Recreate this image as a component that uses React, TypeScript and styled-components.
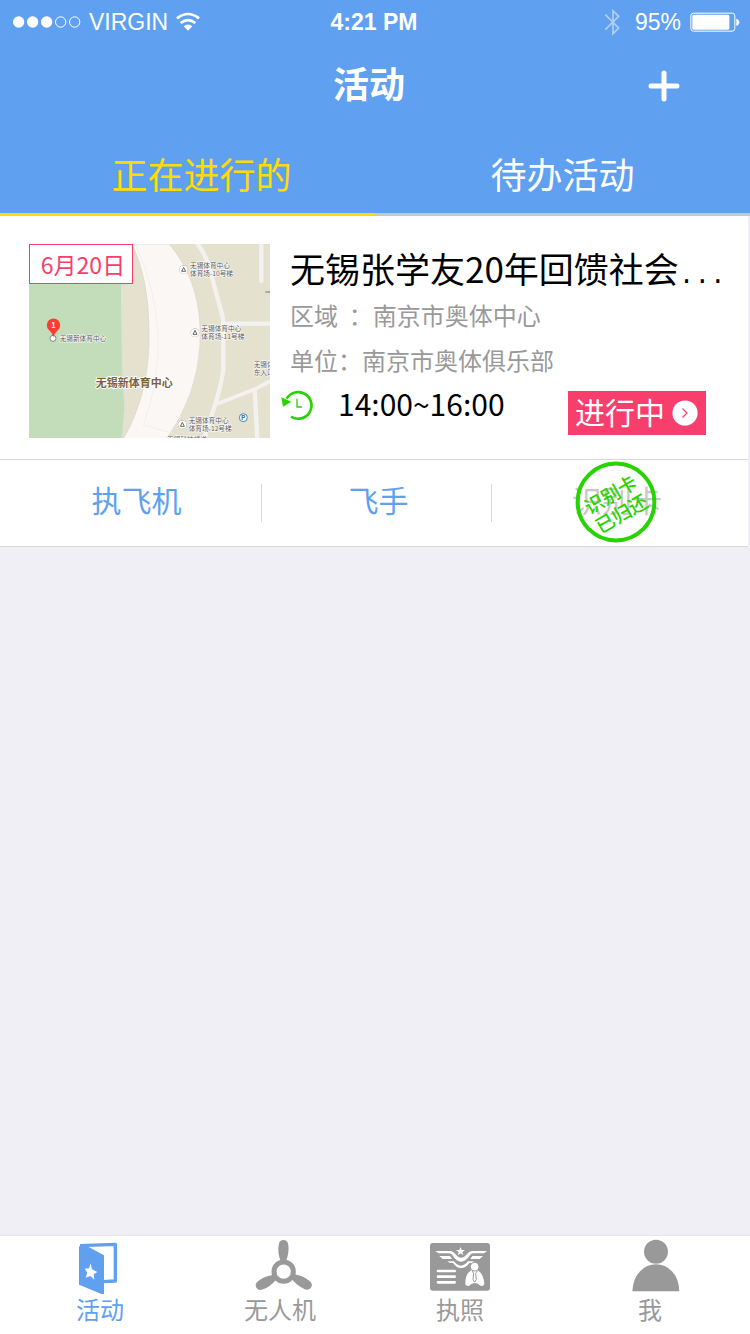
import React from "react";
import styled, { createGlobalStyle } from "styled-components";

const BLUE = "#60a0f0";
const YELLOW = "#ffdc00";
const PINK = "#f73e6c";
const GREEN = "#28d400";
const GREY = "#999999";
const LINE = "#d9d9d9";

const GlobalStyle = createGlobalStyle`
  * { box-sizing: border-box; }
  body {
    margin: 0;
    background: #efeff5;
    font-family: "Noto Sans CJK SC", sans-serif;
  }
  button {
    margin: 0;
    padding: 0;
    border: 0;
    background: none;
    font: inherit;
    cursor: pointer;
  }
  svg { display: block; flex: none; }
`;

const Screen = styled.div`
  min-height: 100vh;
  display: flex;
  flex-direction: column;
`;

const Header = styled.header`
  background: ${BLUE};
  color: #fff;
`;

const StatusBar = styled.div`
  height: 44px;
  padding: 0 10px 0 12px;
  display: grid;
  grid-template-columns: 1fr auto 1fr;
  align-items: center;
  font-family: "Liberation Sans", Arial, sans-serif;
  font-size: 23px;
  line-height: 44px;
`;

const StatusGroup = styled.div<{ $end?: boolean }>`
  display: flex;
  align-items: center;
  gap: ${(p) => (p.$end ? 9 : 7)}px;
  justify-content: ${(p) => (p.$end ? "flex-end" : "flex-start")};
`;

const Clock = styled.span`
  padding-right: 4px;
  font-weight: bold;
`;

const BluetoothSlot = styled.span`
  margin-right: 6px;
`;

const NavBar = styled.div`
  height: 84px;
  padding-right: 12px;
  display: grid;
  grid-template-columns: 1fr auto 1fr;
  align-items: center;
`;

const Title = styled.h1`
  grid-column: 2;
  margin: 0;
  padding-bottom: 8px;
  font-size: 36px;
  line-height: 48px;
  font-weight: 700;
`;

const AddButton = styled.button`
  justify-self: end;
  width: 44px;
  height: 44px;
  margin-right: 52px;
  display: grid;
  place-items: center;
`;

const Tabs = styled.div`
  display: grid;
  grid-template-columns: 1fr 1fr;
`;

const Tab = styled.button<{ $active?: boolean }>`
  height: 88px;
  padding: ${(p) => (p.$active ? "4px 0 0 28px" : "4px 0 0")};
  border-bottom: 3px solid ${(p) => (p.$active ? YELLOW : "#c8c8c8")};
  color: ${(p) => (p.$active ? YELLOW : "#fff")};
  font-size: 36px;
  line-height: 48px;
`;

const Main = styled.main`
  flex: 1;
`;

const Card = styled.article`
  margin-right: 2px;
  background: #fff;
  border-bottom: 1px solid ${LINE};
`;

const CardBody = styled.div`
  padding: 28px 0 21px 29px;
  display: flex;
  gap: 11px;
  border-bottom: 1px solid ${LINE};
`;

const MapBox = styled.div`
  position: relative;
  flex: none;
`;

const DateTag = styled.time`
  position: absolute;
  top: 0;
  left: 0;
  width: 104px;
  height: 40px;
  padding-left: 4px;
  border: 1px solid ${PINK};
  background: #fff;
  color: ${PINK};
  font-size: 23px;
  line-height: 38px;
  text-align: center;
`;

const Info = styled.div`
  flex: 1;
  min-width: 0;
`;

const EventTitle = styled.h2`
  margin: 0;
  padding-left: 9px;
  font-size: 35px;
  line-height: 48px;
  font-weight: 400;
  color: #000;
  white-space: nowrap;
`;

const Dots = styled.span`
  font-family: "Liberation Mono", monospace;
  font-size: 26px;
  line-height: 1;
`;

const Detail = styled.p`
  margin: 0;
  padding-left: 9px;
  font-size: 24px;
  line-height: 45px;
  color: ${GREY};
  white-space: pre;
`;

const TimeRow = styled.div`
  padding: 3px 42px 0 0;
  display: flex;
  align-items: flex-start;
`;

const ClockSlot = styled.span`
  padding-top: 4px;
`;

const TimeText = styled.span`
  margin-left: 24px;
  font-size: 30px;
  line-height: 36px;
  color: #000;
`;

const StateButton = styled.button`
  height: 44px;
  margin: 6px 0 0 auto;
  padding: 0 8px 0 7px;
  display: flex;
  align-items: center;
  gap: 7px;
  background: ${PINK};
  color: #fff;
  font-size: 30px;
  line-height: 40px;
`;

const StateLabel = styled.span`
  height: 44px;
`;

const Actions = styled.div`
  height: 86px;
  display: grid;
  grid-template-columns: 262fr 230fr 256fr;
  align-items: center;
`;

const Action = styled.button<{ $shift?: number }>`
  position: relative;
  height: 38px;
  padding: 0 0 8px ${(p) => p.$shift ?? 0}px;
  color: ${BLUE};
  font-size: 30px;
  line-height: 30px;
  border-right: 1px solid ${LINE};

  &:last-child { border-right: 0; }
  &:disabled { color: #c8c8c8; padding-right: 6px; cursor: default; }
`;

const StampSlot = styled.span`
  position: absolute;
  inset: 0;
  padding: 0 9px 2px 0;
  display: grid;
  place-content: center;
`;

const TabBar = styled.nav`
  padding: 2px 0 10px 10px;
  display: grid;
  grid-template-columns: 9fr 9fr 9fr 10fr;
  background: #fff;
  border-top: 1px solid #e6e6ea;
`;

const TabLink = styled.a<{ $active?: boolean }>`
  display: flex;
  flex-direction: column;
  align-items: center;
  color: ${(p) => (p.$active ? BLUE : GREY)};
  font-size: 24px;
  line-height: 30px;
  text-decoration: none;
`;

const SignalIcon = () => (
  <svg width="70" height="12" viewBox="36 47 210 36" aria-hidden="true">
    {[56, 98, 140].map((x) => <circle key={x} cx={x} cy="65" r="17" fill="#fff" />)}
    {[182, 224].map((x) => (
      <circle key={x} cx={x} cy="65" r="15.5" fill="none" stroke="#fff" strokeWidth="3" />
    ))}
  </svg>
);

const WifiIcon = () => (
  <svg width="26" height="20" viewBox="530 34 78 60" aria-hidden="true">
    <g fill="none" stroke="#fff" strokeWidth="8">
      <path d="M536 53 Q569 27 602 53" />
      <path d="M547 67 Q569 50 591 67" />
    </g>
    <path d="M556 77 Q569 66 582 77 L569 90Z" fill="#fff" />
  </svg>
);

const BluetoothIcon = () => (
  <svg width="16" height="28" viewBox="684 22 48 84" aria-hidden="true">
    <path d="M688 42 L728 82 L711 99 V30 L728 47 L688 87" fill="none" stroke="#fff" strokeWidth="5" opacity=".5" />
  </svg>
);

const BatteryIcon = () => (
  <svg width="50" height="20" viewBox="944 34 150 60" aria-hidden="true">
    <rect x="946.5" y="37.5" width="132" height="54" rx="8" fill="none" stroke="#fff" strokeWidth="3" />
    <rect x="951" y="42" width="111" height="45" rx="4" fill="#fff" />
    <path d="M1083 54 Q1092 57 1092 65 Q1092 73 1083 76Z" fill="#fff" />
  </svg>
);

const PlusIcon = () => (
  <svg width="32" height="32" viewBox="0 0 32 32" aria-hidden="true">
    <path d="M16 3V29M3 16H29" stroke="#fff" strokeWidth="5" strokeLinecap="round" />
  </svg>
);

const HistoryIcon = () => (
  <svg width="33" height="32" viewBox="16 463 99 96" aria-hidden="true">
    <path d="M33 492 A40 40 0 1 1 46 546" fill="none" stroke={GREEN} strokeWidth="8" />
    <path d="M17 488 L47 501 L22 516Z" fill={GREEN} />
    <path d="M64 492V517H79" fill="none" stroke={GREEN} strokeWidth="4" />
  </svg>
);

const GoIcon = () => (
  <svg width="26" height="26" viewBox="0 0 26 26" aria-hidden="true">
    <circle cx="13" cy="13" r="12.6" fill="#fff" />
    <path d="M10.5 8.5 L15 13 L10.5 17.5" fill="none" stroke={PINK} strokeWidth="1.2" />
  </svg>
);

const Stamp = () => (
  <svg width="82" height="82" viewBox="-41 -41 82 82" role="img" aria-label="识别卡已归还">
    <circle r="38.4" fill="none" stroke={GREEN} strokeWidth="4" />
    <g transform="rotate(-30)" fill={GREEN} fontSize="19" fontWeight="500" textAnchor="middle">
      <text x="-1" y="-2">识别卡</text>
      <text x="-1" y="20">已归还</text>
    </g>
  </svg>
);

const gates = [
  { x: 491, y: 104, no: "10" },
  { x: 525, y: 293, no: "11" },
  { x: 487, y: 569, no: "12" },
];

const VenueMap = () => (
  <svg width="241" height="194" viewBox="27 27 723 582" role="img" aria-label="无锡新体育中心地图">
    <rect x="27" y="27" width="723" height="582" fill="#e5e1cf" />
    <path d="M27 27H303V200L306 400L313 515L306 609H27Z" fill="#c3ddba" />
    <path
      d="M336 27 Q386 130 387 285 Q392 470 310 612 H440 Q532 480 540 330 Q550 150 448 27Z"
      fill="#faf7f5" stroke="#d8d4cb" strokeWidth="2"
    />
    <path d="M346 27 Q470 300 370 570 L470 598" fill="none" stroke="#efeae6" strokeWidth="2" />
    <g fill="none" stroke="#f4f2f0" strokeWidth="13" strokeLinejoin="round">
      <path d="M528 20 Q560 60 571 110 L604 230 Q611 250 610 290 V405 Q600 470 575 540 L552 612" />
      <path d="M608 266H752" />
      <path d="M590 507 L704 463 L752 438" strokeWidth="11" />
      <path d="M704 465 L712 612" />
      <path d="M724 20V138" strokeLinecap="round" />
    </g>
    <path d="M736 171H750" stroke="#aaa6a6" strokeWidth="6" />
    <g fontSize="20" fill="#555" stroke="#fff" strokeWidth="3" paintOrder="stroke">
      {gates.map((g) => (
        <g key={g.no}>
          <circle cx={g.x} cy={g.y} r="12" fill="#fff" stroke="#8b8b8b" strokeWidth="2" />
          <path d={`M${g.x - 6} ${g.y + 5}L${g.x} ${g.y - 7}L${g.x + 6} ${g.y + 5}Z`} fill="none" stroke="#666" strokeWidth="3" />
          <text x={g.x + 19} y={g.y - 4}>无锡体育中心</text>
          <text x={g.x + 19} y={g.y + 19}>{`体育场-${g.no}号梯`}</text>
        </g>
      ))}
      <text x="119" y="317">无锡新体育中心</text>
      <text x="701" y="397">无锡体育</text>
      <text x="701" y="419">东入口</text>
      <text x="441" y="620">无锡科技频道</text>
    </g>
    <text x="227" y="457" fontSize="33" fontWeight="700" fill="#7a6238" stroke="#fff" strokeWidth="5" paintOrder="stroke">
      无锡新体育中心
    </text>
    <circle cx="670" cy="548" r="12" fill="#fff" stroke="#4f86a8" strokeWidth="3" />
    <text x="663" y="555" fontSize="19" fontWeight="700" fill="#2b6c98">P</text>
    <circle cx="99" cy="310" r="9" fill="#fff" stroke="#888" strokeWidth="3" />
    <path d="M100 306 Q96 292 86 284 A20 20 0 1 1 115 284 Q104 292 100 306Z" fill="#fb3d34" />
    <text x="94" y="279" fontSize="22" fontWeight="700" fill="#fff">1</text>
  </svg>
);

const EventIcon = () => (
  <svg width="72" height="56" viewBox="12 24 216 168" aria-hidden="true">
    <path d="M60 47 L166 43 V153 L128 155" fill="none" stroke={BLUE} strokeWidth="10" strokeLinejoin="round" />
    <path d="M57 49 L86 51 L132 76 V195 L57 164Z" fill={BLUE} />
    <path d="M92 100 L96 118 L112 126 L101 133 L103 149 L91 138 L77 143 L82 128 L74 116 L87 115Z" fill="#fff" />
  </svg>
);

const DroneIcon = () => (
  <svg width="72" height="56" viewBox="552 24 216 168" aria-hidden="true">
    <circle cx="671" cy="125" r="29" fill="none" stroke={GREY} strokeWidth="15" />
    {[0, 120, 240].map((a) => (
      <path
        key={a}
        transform={`rotate(${a} 671 125)`}
        d="M662 94 Q652 68 656 45 Q658 30 670 30 Q683 30 685 45 Q688 68 678 94Z"
        fill={GREY}
      />
    ))}
  </svg>
);

const LicenceIcon = () => (
  <svg width="72" height="56" viewBox="42 24 216 168" aria-hidden="true">
    <rect x="60" y="39" width="180" height="143" rx="9" fill={GREY} />
    <path d="M152 51 L155 60 L165 60 L157 66 L160 76 L152 70 L143 76 L146 66 L138 60 L148 60Z" fill="#fff" />
    <g fill="#fff">
      <path d="M76 63 H122 Q130 64 136 72 Q144 83 153 83 Q163 83 171 72 Q177 64 185 63 H231 L222 70 H189 Q182 71 178 78 Q167 95 153 95 Q140 95 129 78 Q125 71 118 70 H86Z" />
      <path d="M88 78 H120 L126 87 H98Z" />
      <path d="M219 78 H187 L181 87 H209Z" />
      <path d="M113 94 H132 Q140 106 153 107 Q165 106 174 94 H192 L187 99 H178 Q168 114 153 114 Q139 114 129 99 H119Z" />
    </g>
    <path d="M84 123H134M84 140H134M84 157H134" stroke="#fff" strokeWidth="8" strokeLinecap="round" />
    <path d="M166 163 Q165 132 184 121 H203 Q221 132 223 163 Q221 169 213 168 Q203 159 194 159 Q185 159 177 168 Q168 169 166 163Z" fill="#fff" />
    <circle cx="194" cy="110" r="13" fill="#fff" stroke={GREY} strokeWidth="3" />
    <path d="M186 123 L191 130 L189 149 L194 156 L199 149 L197 130 L202 123" fill="none" stroke={GREY} strokeWidth="3" />
  </svg>
);

const PersonIcon = () => (
  <svg width="72" height="56" viewBox="612 24 216 168" aria-hidden="true">
    <circle cx="738" cy="65" r="36" fill={GREY} />
    <path d="M667 184 Q669 146 689 125 Q710 103 738 103 Q766 103 787 125 Q807 146 808 184Z" fill={GREY} />
  </svg>
);

export default function App() {
  return (
    <Screen>
      <GlobalStyle />
      <Header>
        <StatusBar>
          <StatusGroup>
            <SignalIcon />
            <span>VIRGIN</span>
            <WifiIcon />
          </StatusGroup>
          <Clock>4:21 PM</Clock>
          <StatusGroup $end>
            <BluetoothSlot><BluetoothIcon /></BluetoothSlot>
            <span>95%</span>
            <BatteryIcon />
          </StatusGroup>
        </StatusBar>
        <NavBar>
          <Title>活动</Title>
          <AddButton type="button" aria-label="添加"><PlusIcon /></AddButton>
        </NavBar>
        <Tabs role="tablist">
          <Tab type="button" role="tab" aria-selected="true" $active>正在进行的</Tab>
          <Tab type="button" role="tab" aria-selected="false">待办活动</Tab>
        </Tabs>
      </Header>

      <Main>
        <Card>
          <CardBody>
            <MapBox>
              <VenueMap />
              <DateTag dateTime="06-20">6月20日</DateTag>
            </MapBox>
            <Info>
              <EventTitle>无锡张学友20年回馈社会<Dots>...</Dots></EventTitle>
              <Detail>{"区域  ：南京市奥体中心"}</Detail>
              <Detail>单位：南京市奥体俱乐部</Detail>
              <TimeRow>
                <ClockSlot><HistoryIcon /></ClockSlot>
                <TimeText>14:00~16:00</TimeText>
                <StateButton type="button"><StateLabel>进行中</StateLabel><GoIcon /></StateButton>
              </TimeRow>
            </Info>
          </CardBody>
          <Actions>
            <Action type="button" $shift={12}>执飞机</Action>
            <Action type="button" $shift={4}>飞手</Action>
            <Action type="button" disabled>
              识别卡
              <StampSlot><Stamp /></StampSlot>
            </Action>
          </Actions>
        </Card>
      </Main>

      <TabBar>
        <TabLink href="#events" $active><EventIcon />活动</TabLink>
        <TabLink href="#drones"><DroneIcon />无人机</TabLink>
        <TabLink href="#licence"><LicenceIcon />执照</TabLink>
        <TabLink href="#me"><PersonIcon />我</TabLink>
      </TabBar>
    </Screen>
  );
}
